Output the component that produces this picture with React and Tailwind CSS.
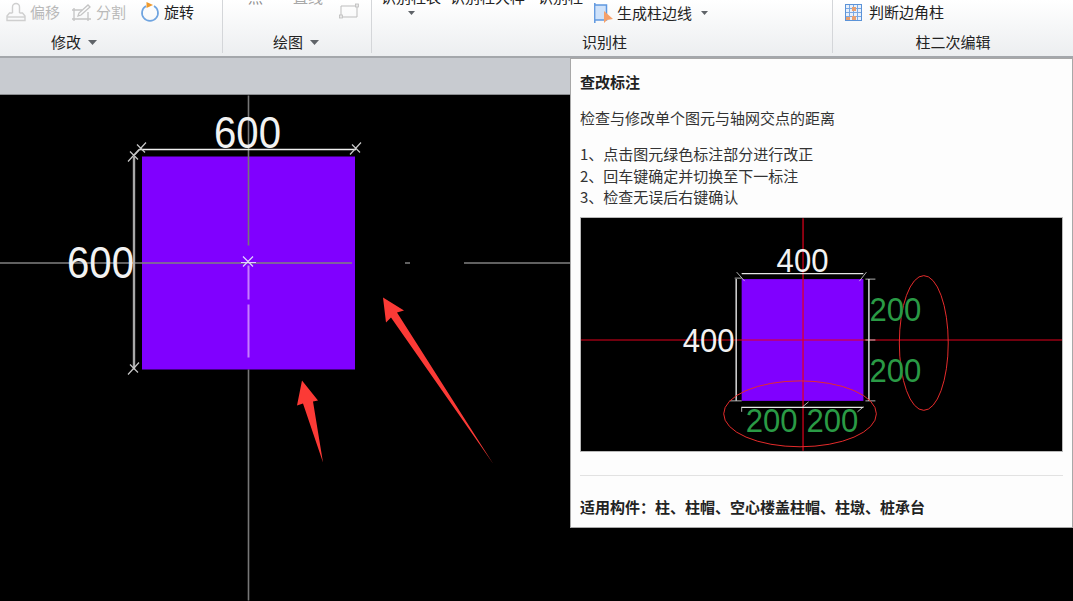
import React from 'react';

const FONT = "font-['Noto_Sans_CJK_SC','Liberation_Sans',sans-serif]";

function Caret({ className = '' }) {
  return (
    <svg width="9" height="5" viewBox="0 0 9 5" className={className}>
      <polygon points="0,0 9,0 4.5,5" fill="#5f6368" />
    </svg>
  );
}

function SmallCaret({ className = '' }) {
  return (
    <svg width="7" height="4" viewBox="0 0 7 4" className={className}>
      <polygon points="0,0 7,0 3.5,4" fill="#5f6368" />
    </svg>
  );
}

function OffsetIcon() {
  return (
    <svg width="20" height="20" viewBox="0 0 20 20" fill="none" stroke="#cfcfcf" strokeWidth="1.4">
      <path d="M6.5 11V5a3.5 3.5 0 0 1 7 0v6" />
      <path d="M6.5 11H3.5L1 14v4.5h18V14l-2.5-3h-3" />
      <path d="M1 15h18" />
    </svg>
  );
}

function SplitIcon() {
  return (
    <svg width="21" height="20" viewBox="0 0 21 20" fill="none" stroke="#c4c4c4" strokeWidth="1.3">
      <path d="M1 8h10M1 17h19M3 6v13M17 10v9" />
      <path d="M7 14l1-3 9-8 2 2-9 8z" />
    </svg>
  );
}

function RotateIcon() {
  return (
    <svg width="20" height="20" viewBox="0 0 20 20" fill="none">
      <path d="M6 4a8 8 0 1 0 8 0" stroke="#6fa4e0" strokeWidth="1.7" />
      <polygon points="6.5,0 13,3 6.5,6" fill="#ef9a2d" />
    </svg>
  );
}

function RectIcon() {
  return (
    <svg width="20" height="16" viewBox="0 0 20 16" fill="none">
      <path d="M2 3h16v11H2z" stroke="#bdbdbd" strokeWidth="1" />
      <rect x="0.5" y="12" width="3" height="3" fill="#e8e8e8" stroke="#bdbdbd" strokeWidth="0.8" />
      <rect x="16.5" y="1" width="3" height="3" fill="#e8e8e8" stroke="#bdbdbd" strokeWidth="0.8" />
    </svg>
  );
}

function EdgeIcon() {
  return (
    <svg width="19" height="20" viewBox="0 0 19 20" fill="none">
      <rect x="2" y="2" width="10" height="15" fill="#cfe2fa" />
      <path d="M0.8 0v20M1 2h11.5v15H1" stroke="#5f98e0" strokeWidth="1.5" />
      <polygon points="10,8 19,16 13,17 10,20" fill="#f6a06a" />
    </svg>
  );
}

function GridIcon() {
  return (
    <svg width="17" height="17" viewBox="0 0 17 17" fill="none">
      <rect x="0.5" y="0.5" width="16" height="16" fill="#e8f0fb" stroke="#5b93d8" />
      <path d="M4.5 1v15M8.5 1v15M12.5 1v15M1 4.5h15M1 8.5h15M1 12.5h15" stroke="#7aa8e2" />
      <rect x="7" y="3" width="4" height="4" fill="#e8a070" />
      <rect x="7" y="12" width="4" height="4" fill="#e8a070" />
      <rect x="1" y="13" width="4" height="3" fill="#e8a070" />
    </svg>
  );
}

function Tool({ icon, label, disabled }) {
  return (
    <div className={`flex items-center gap-[4px] ${disabled ? 'text-[#b9b9b9]' : 'text-[#222]'}`}>
      {icon}
      <span>{label}</span>
    </div>
  );
}

function Ribbon() {
  return (
    <div className="flex h-[58px] shrink-0 overflow-hidden border-b-2 border-[#a4a7ab] bg-gradient-to-b from-white to-[#eceef0] text-[15px] leading-5 text-[#222]">
      {/* 修改 */}
      <div className="flex h-[53px] w-[223px] shrink-0 flex-col border-r border-[#d4d6d9]">
        <div className="flex h-6 items-center pl-[6px]">
          <Tool icon={<OffsetIcon />} label="偏移" disabled />
          <div className="ml-[11px]"><Tool icon={<SplitIcon />} label="分割" disabled /></div>
          <div className="ml-[14px]"><Tool icon={<RotateIcon />} label="旋转" /></div>
        </div>
        <div className="mt-2 flex items-center pl-[51px]">
          <span>修改</span>
          <Caret className="ml-[7px]" />
        </div>
      </div>

      {/* 绘图 */}
      <div className="flex h-[53px] w-[149px] shrink-0 flex-col border-r border-[#d4d6d9]">
        <div className="flex h-6 items-start pl-[25px] text-[#8c8c8c]">
          <span className="-mt-[13px]">点</span>
          <span className="-mt-[13px] ml-[30px] text-[#a8a8a8]">直线</span>
          <div className="ml-[16px] mt-[3px]"><RectIcon /></div>
        </div>
        <div className="mt-2 flex items-center pl-[50px]">
          <span>绘图</span>
          <Caret className="ml-[7px]" />
        </div>
      </div>

      {/* 识别柱 */}
      <div className="flex h-[53px] w-[461px] shrink-0 flex-col border-r border-[#d4d6d9]">
        <div className="flex h-6 items-start pl-[9px]">
          <div className="flex flex-col items-center">
            <span className="-mt-[13px]">识别柱表</span>
            <SmallCaret className="mt-[4px]" />
          </div>
          <span className="-mt-[13px] ml-[9px]">识别柱大样</span>
          <span className="-mt-[13px] ml-[13px]">识别柱</span>
          <div className="ml-[11px] mt-[3px] flex items-start gap-[4px]">
            <EdgeIcon />
            <span>生成柱边线</span>
            <SmallCaret className="ml-[5px] mt-[8px]" />
          </div>
        </div>
        <div className="mt-2 pl-[210px]">识别柱</div>
      </div>

      {/* 柱二次编辑 */}
      <div className="flex h-[53px] flex-1 flex-col">
        <div className="flex h-6 items-center gap-[7px] pl-[12px]">
          <GridIcon />
          <span>判断边角柱</span>
        </div>
        <div className="mt-2 text-center">柱二次编辑</div>
      </div>
    </div>
  );
}

// CAD view, drawn in page coordinates (the canvas starts at y=96)
function Canvas() {
  const tick = (x, y) => (
    <path d={`M${x - 6} ${y + 6}L${x + 5} ${y - 6}M${x - 4} ${y - 4}L${x + 4} ${y + 4}`} stroke="#c8c8c8" strokeWidth="1.2" />
  );
  const numFont = 'Liberation Sans, sans-serif';
  return (
    <svg viewBox="0 96 1073 505" className="block h-full w-full bg-black" fill="none">
      <rect x="142" y="157" width="213" height="213" fill="#8000ff" />
      <path d="M0 263.5H352M405 263.5H410M464 263.5H571" stroke="#808080" strokeWidth="1.4" />
      <path d="M248.5 96V246M248.5 370V601" stroke="#777" strokeWidth="1.6" />
      <path d="M248.5 266V300M248.5 305V358" stroke="#c77dff" strokeWidth="2" />
      <path d="M243 257L253 267M253 257L243 267M241 263H256" stroke="#e0d0ff" strokeWidth="1.2" />
      <path d="M140 150H356" stroke="#eee" strokeWidth="1.6" />
      <path d="M134 157V370" stroke="#a8a8a8" strokeWidth="2.4" />
      {tick(141, 149)}
      {tick(356, 149)}
      {tick(134, 156)}
      {tick(134, 369)}
      <text x="214" y="148" fontFamily={numFont} fontSize="45" textLength="67" lengthAdjust="spacingAndGlyphs" fill="#f2f2f2">600</text>
      <text x="67" y="278" fontFamily={numFont} fontSize="45" textLength="67" lengthAdjust="spacingAndGlyphs" fill="#f2f2f2">600</text>
      <polygon points="302,381 318,401 313,402 323,463 303,404 297,406" fill="#fb3a36" />
      <polygon points="383,298 404,311 397,313 493,464 391,318 386,323" fill="#fb3a36" />
    </svg>
  );
}

function TooltipPicture() {
  const numFont = 'Liberation Sans, sans-serif';
  const num = { fontFamily: numFont, fontSize: 34, textLength: 52, lengthAdjust: 'spacingAndGlyphs' };
  return (
    <div className="h-[235px] border border-[#b9b9b9] bg-black">
      <svg viewBox="581 218 482 233" className="block h-full w-full" fill="none">
        <rect x="742" y="279" width="122" height="122" fill="#8000ff" />
        <path d="M581 340H1063M803.5 218V451" stroke="#e0001c" strokeWidth="1.2" />
        <path d="M742 273.5H864M736.5 279V401M869.5 279V401M742 407.5H864" stroke="#e6e6e6" strokeWidth="1.4" />
        <path d="M737 272L745 281M735 278H742M867 272L860 281M866 279H876M866 340H876M866 401H876M730 401H742M742 407V412M803 407L809 402M864 407L858 412" stroke="#ddd" strokeWidth="0.8" />
        <ellipse cx="924.5" cy="343" rx="24.5" ry="67.5" stroke="#e52b2b" />
        <ellipse cx="800.5" cy="414" rx="76.5" ry="33" stroke="#e52b2b" />
        <text x="777" y="272" {...num} fill="#f2f2f2">400</text>
        <text x="683" y="352" {...num} fill="#f2f2f2">400</text>
        <text x="870" y="321" {...num} fill="#2a9a45">200</text>
        <text x="870" y="382" {...num} fill="#2a9a45">200</text>
        <text x="746" y="432" {...num} fill="#2a9a45">200</text>
        <text x="807" y="432" {...num} fill="#2a9a45">200</text>
      </svg>
    </div>
  );
}

function Tooltip() {
  return (
    <div className="absolute left-[570px] top-[58px] h-[470px] w-[503px] border border-[#a8a8a8] bg-[#fdfdfd] px-[9px] text-[15px] leading-[21.5px] text-[#333]">
      <div className="mt-[12px] font-bold text-[#222]">查改标注</div>
      <div className="mt-[14px]">检查与修改单个图元与轴网交点的距离</div>
      <div className="mt-[15px]">
        <div>1、点击图元绿色标注部分进行改正</div>
        <div>2、回车键确定并切换至下一标注</div>
        <div>3、检查无误后右键确认</div>
      </div>
      <div className="mt-[9px]"><TooltipPicture /></div>
      <div className="mt-[23px] border-t border-[#e2e2e2]" />
      <div className="mt-[20px] font-bold text-[#222]">适用构件：柱、柱帽、空心楼盖柱帽、柱墩、桩承台</div>
    </div>
  );
}

export default function App() {
  return (
    <div className={`relative flex h-[601px] w-[1073px] flex-col overflow-hidden bg-black ${FONT}`}>
      <Ribbon />
      <div className="h-[37px] shrink-0 border-b border-[#8b8d90] bg-[#c8cbd0]" />
      <div className="min-h-0 flex-1">
        <Canvas />
      </div>
      <Tooltip />
    </div>
  );
}
